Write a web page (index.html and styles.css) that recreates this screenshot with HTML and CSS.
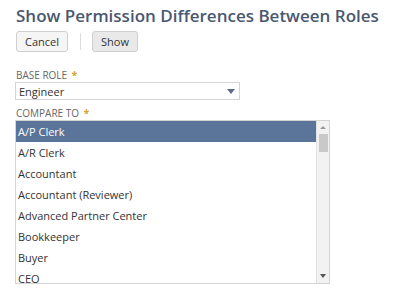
FILE: index.html
```html
<!DOCTYPE html>
<html lang="en">
<head>
  <meta charset="UTF-8">
  <title>Show Permission Differences Between Roles</title>
  <link rel="stylesheet" href="styles.css">
</head>
<body>
  <div class="page">
    <h1 class="title">Show Permission Differences Between Roles</h1>
    <div class="actions">
      <button class="btn">Cancel</button>
      <span class="divider"></span>
      <button class="btn btn-primary">Show</button>
    </div>

    <div class="field">
      <div class="label">BASE ROLE <span class="req">*</span></div>
      <div class="select">
        <span>Engineer</span>
        <span class="arrow"></span>
      </div>
    </div>

    <div class="field field-list">
      <div class="label">COMPARE TO <span class="req">*</span></div>
      <div class="listbox">
        <div class="options">
          <div class="option selected">A/P Clerk</div>
          <div class="option">A/R Clerk</div>
          <div class="option">Accountant</div>
          <div class="option">Accountant (Reviewer)</div>
          <div class="option">Advanced Partner Center</div>
          <div class="option">Bookkeeper</div>
          <div class="option">Buyer</div>
          <div class="option">CEO</div>
        </div>
        <div class="scrollbar">
          <span class="sb-up"></span>
          <span class="sb-thumb"></span>
          <span class="sb-down"></span>
        </div>
      </div>
    </div>
  </div>
</body>
</html>
```

FILE: styles.css
```css
body {
  margin: 0;
  font-family: "Open Sans", Arial, sans-serif;
  background: #fff;
  color: #333;
}
.page {
  padding: 4px 16px 0 15px;
}
.title {
  margin: 0 0 0 1px;
  font-size: 17px;
  line-height: 24px;
  font-weight: 600;
  color: #4a5870;
  white-space: nowrap;
}
.actions {
  display: flex;
  align-items: center;
  margin-top: 3px;
}
.btn {
  height: 21px;
  padding: 0 8px;
  font-family: "Open Sans", Arial, sans-serif;
  font-size: 11px;
  color: #333;
  background: #f5f5f5;
  border: 1px solid #cfcfcf;
  border-radius: 3px;
  margin-left: 1px;
}
.btn-primary {
  background: #e9e9e9;
  padding: 0 8px;
}
.divider {
  width: 1px;
  height: 17px;
  background: #dcdcdc;
  margin: 0 10px 0 12px;
}
.field {
  margin-top: 17px;
}
.field-list {
  margin-top: 7px;
}
.label {
  font-size: 10px;
  line-height: 12px;
  color: #666;
  margin-left: 1px;
  margin-bottom: 1px;
}
.req {
  color: #d6a32a;
  font-weight: 700;
  margin-left: 2px;
}
.select {
  width: 216px;
  height: 16px;
  border: 1px solid #d4d4d4;
  display: flex;
  align-items: center;
  justify-content: space-between;
  padding: 0 4px 0 3px;
  font-size: 11px;
  color: #333;
}
.arrow {
  width: 0;
  height: 0;
  border-left: 4px solid transparent;
  border-right: 4px solid transparent;
  border-top: 5px solid #5a6d88;
}
.listbox {
  width: 313px;
  height: 162px;
  border: 1px solid #d4d4d4;
  display: flex;
  overflow: hidden;
}
.options {
  flex: 1;
  overflow: hidden;
}
.option {
  height: 21px;
  line-height: 21px;
  padding-left: 2px;
  font-size: 11px;
  color: #333;
  white-space: nowrap;
}
.option.selected {
  background: #5b7499;
  color: #fff;
}
.scrollbar {
  width: 12px;
  background: #f2f2f2;
  border-left: 1px solid #e2e2e2;
  display: flex;
  flex-direction: column;
  align-items: center;
}
.sb-up, .sb-down {
  width: 0;
  height: 0;
  border-left: 3px solid transparent;
  border-right: 3px solid transparent;
}
.sb-up {
  border-bottom: 3px solid #999;
  margin-top: 5px;
}
.sb-thumb {
  width: 9px;
  height: 18px;
  background: #c9c9c9;
  margin-top: 5px;
}
.sb-down {
  border-top: 4px solid #555;
  margin-top: auto;
  margin-bottom: 5px;
}
```
